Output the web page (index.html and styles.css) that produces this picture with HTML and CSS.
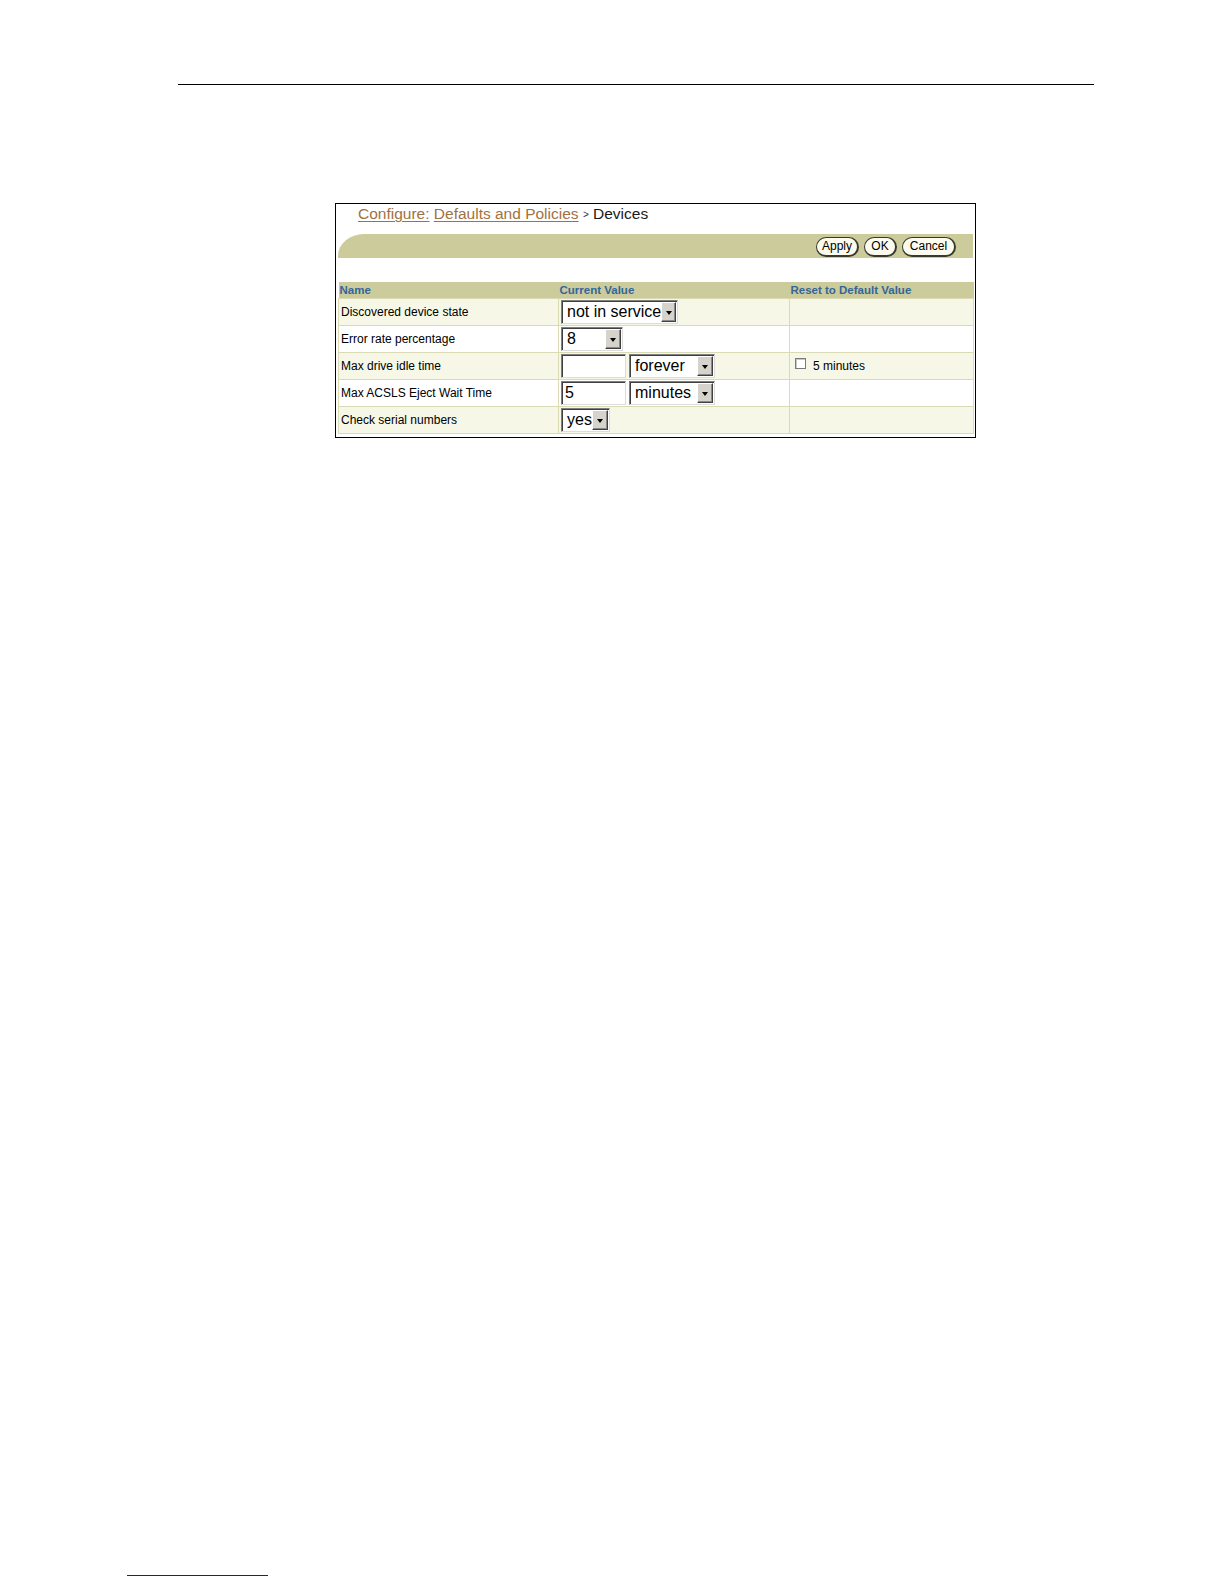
FILE: index.html
```html
<!DOCTYPE html>
<html>
<head>
<meta charset="utf-8">
<title>Configure: Devices</title>
<link rel="stylesheet" href="styles.css">
</head>
<body>
<div class="page">
  <div class="top-rule"></div>

  <div class="shot">
    <div class="crumbs">
      <a class="link" href="#">Configure:</a> <a class="link" href="#">Defaults and Policies</a> <span class="sep">&gt;</span> <span class="current">Devices</span>
    </div>
    <div class="bar">
      <span class="btn b-apply">Apply</span>
      <span class="btn b-ok">OK</span>
      <span class="btn b-cancel">Cancel</span>
    </div>
    <table class="grid">
      <colgroup>
        <col class="c1"><col class="c2"><col class="c3">
      </colgroup>
      <thead>
        <tr><th>Name</th><th>Current Value</th><th>Reset to Default Value</th></tr>
      </thead>
      <tbody>
        <tr class="odd">
          <td>Discovered device state</td>
          <td><span class="sel w-nis"><span class="val">not in service</span><span class="drop"></span></span></td>
          <td></td>
        </tr>
        <tr class="even">
          <td>Error rate percentage</td>
          <td><span class="sel w-8"><span class="val">8</span><span class="drop"></span></span></td>
          <td></td>
        </tr>
        <tr class="odd">
          <td>Max drive idle time</td>
          <td><span class="pair"><span class="inp"></span><span class="sel w-unit"><span class="val">forever</span><span class="drop"></span></span></span></td>
          <td><span class="chk-wrap"><span class="chk"></span><span class="chk-label">5 minutes</span></span></td>
        </tr>
        <tr class="even">
          <td>Max ACSLS Eject Wait Time</td>
          <td><span class="pair"><span class="inp">5</span><span class="sel w-unit"><span class="val">minutes</span><span class="drop"></span></span></span></td>
          <td></td>
        </tr>
        <tr class="odd">
          <td>Check serial numbers</td>
          <td><span class="sel w-yes"><span class="val">yes</span><span class="drop"></span></span></td>
          <td></td>
        </tr>
      </tbody>
    </table>
  </div>

  <div class="foot-rule"></div>
</div>
</body>
</html>
```

FILE: styles.css
```css
html, body {
  margin: 0;
  padding: 0;
  background: #ffffff;
  font-family: "Liberation Sans", Arial, sans-serif;
}

.page {
  width: 1224px;
  height: 1584px;
  padding-top: 84px;
  box-sizing: border-box;
  overflow: hidden;
}

.top-rule {
  margin-left: 178px;
  width: 916px;
  height: 1px;
  background: #000000;
}

.shot {
  margin-top: 118px;
  margin-left: 335px;
  width: 641px;
  box-sizing: border-box;
  border: 1px solid #000000;
  padding: 0 2px 3px 2px;
  background: #ffffff;
}

.crumbs {
  height: 30px;
  box-sizing: border-box;
  padding-left: 20px;
  font-size: 15.5px;
  line-height: 20px;
  color: #000000;
  white-space: nowrap;
}

.link {
  color: #a0723f;
  text-decoration: underline;
  text-underline-offset: 2px;
  text-decoration-thickness: 1px;
}

.sep {
  font-size: 10px;
  color: #333333;
  position: relative;
  top: -1px;
}

.current {
  color: #1a1a1a;
}

.bar {
  height: 24px;
  background: #cbcb9b;
  border-top-left-radius: 26px 22px;
  display: flex;
  justify-content: flex-end;
  align-items: flex-start;
  gap: 5px;
  padding: 3px 17px 0 0;
  box-sizing: border-box;
  margin-bottom: 24px;
}

.btn {
  height: 20px;
  box-sizing: border-box;
  border: 1px solid #3a3a2a;
  border-right-width: 2px;
  border-bottom-width: 2px;
  border-radius: 10px;
  background: #fbfbef;
  font-size: 12px;
  line-height: 17px;
  text-align: center;
  color: #000000;
}

.b-apply { width: 43px; }
.b-ok { width: 33px; }
.b-cancel { width: 54px; }

.grid {
  width: 635px;
  border-collapse: collapse;
  table-layout: fixed;
  font-size: 12px;
}

.c1 { width: 220px; }
.c2 { width: 231px; }
.c3 { width: 184px; }

.grid th {
  height: 16px;
  padding: 0 0 0 1px;
  background: #cbcb9b;
  color: #336699;
  font-size: 11.5px;
  font-weight: bold;
  text-align: left;
  line-height: 16px;
  border: none;
}

.grid td {
  height: 26px;
  padding: 0 0 0 2px;
  border: 1px solid #dadab4;
  vertical-align: middle;
  white-space: nowrap;
  color: #000000;
}

.grid tr.odd td { background: #f7f7e7; }
.grid tr.even td { background: #ffffff; }

.sel, .inp {
  display: inline-flex;
  align-items: center;
  height: 24px;
  box-sizing: border-box;
  background: #ffffff;
  border: 1px solid;
  border-color: #7f7f7f #dcdcdc #dcdcdc #7f7f7f;
  box-shadow: inset 1px 1px 0 #404040;
  vertical-align: middle;
  font-size: 16px;
  color: #000000;
}

.sel .val {
  flex: 1;
  padding-left: 5px;
  line-height: 22px;
}

.inp {
  width: 65px;
  padding-left: 3px;
  line-height: 22px;
}

.drop {
  width: 16px;
  height: 20px;
  margin-right: 1px;
  box-sizing: border-box;
  background: #d6d3cc;
  border: 1px solid;
  border-color: #ffffff #404040 #404040 #ffffff;
  box-shadow: inset -1px -1px 0 #8a8a8a;
  position: relative;
}

.drop::after {
  content: "";
  position: absolute;
  left: 4px;
  top: 8px;
  width: 0;
  height: 0;
  border-left: 3.5px solid transparent;
  border-right: 3.5px solid transparent;
  border-top: 4px solid #000000;
}

.w-nis { width: 117px; }
.w-8 { width: 62px; }
.w-unit { width: 86px; }
.w-yes { width: 49px; }

.pair {
  display: inline-flex;
  gap: 3px;
  vertical-align: middle;
}

.chk-wrap {
  display: inline-flex;
  align-items: center;
  padding-left: 3px;
}

.chk {
  width: 11px;
  height: 11px;
  box-sizing: border-box;
  border: 1px solid #7a7a7a;
  box-shadow: inset 1px 1px 0 #c8c8c8;
  background: #ffffff;
  position: relative;
  top: -2px;
}

.chk-label {
  margin-left: 7px;
  font-size: 12px;
  position: relative;
  top: 1px;
}

.foot-rule {
  margin-top: 1137px;
  margin-left: 127px;
  width: 141px;
  height: 1px;
  background: #1c1c88;
}
```
